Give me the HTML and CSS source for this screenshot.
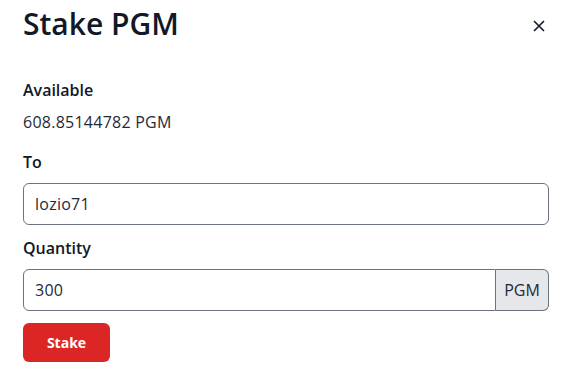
FILE: index.html
```html
<!DOCTYPE html>
<html lang="en">
<head>
<meta charset="utf-8">
<title>Stake PGM</title>
<link rel="stylesheet" href="styles.css">
</head>
<body>
<div class="modal">
  <div class="modal-header">
    <h3 class="modal-title">Stake PGM</h3>
    <button class="close" type="button" aria-label="Close">
      <svg width="12" height="12" viewBox="0 0 12 12"><path d="M1 1 L11 11 M11 1 L1 11" stroke="#111827" stroke-width="1.6" fill="none"/></svg>
    </button>
  </div>
  <div class="modal-body">
    <div class="label">Available</div>
    <div class="value">608.85144782 PGM</div>
    <label class="label label-to">To</label>
    <input class="input" type="text" value="lozio71">
    <label class="label label-qty">Quantity</label>
    <div class="input-group">
      <input class="input input-grouped" type="text" value="300">
      <span class="addon">PGM</span>
    </div>
    <button class="btn" type="button">Stake</button>
  </div>
</div>
</body>
</html>
```
FILE: styles.css
```css
html, body {
  margin: 0;
  padding: 0;
  background: #ffffff;
}
body {
  font-family: "Open Sans", "Liberation Sans", sans-serif;
  color: #1f2937;
  font-size: 16px;
  line-height: 24px;
}
.modal {
  padding: 6px 23px 0 23px;
}
.modal-header {
  display: flex;
  align-items: flex-start;
  justify-content: space-between;
}
.modal-title {
  margin: 0;
  font-size: 30px;
  line-height: 36px;
  font-weight: 600;
  color: #111827;
}
.close {
  margin: 14px 3px 0 0;
  padding: 0;
  border: 0;
  background: transparent;
  width: 12px;
  height: 12px;
  display: flex;
}
.modal-body {
  display: flex;
  flex-direction: column;
  align-items: flex-start;
  margin-top: 36px;
}
.label {
  display: block;
  font-weight: 600;
  color: #111827;
}
.value {
  margin-top: 8px;
  color: #1f2937;
  letter-spacing: 0.25px;
}
.label-to {
  margin-top: 16px;
}
.label-qty {
  margin-top: 11px;
}
.input {
  box-sizing: border-box;
  width: 526px;
  height: 42px;
  margin-top: 9px;
  padding: 0 11px;
  border: 1px solid #6b7280;
  border-radius: 6px;
  font-family: inherit;
  font-size: 16px;
  letter-spacing: 0.25px;
  color: #1f2937;
  background: #fff;
  outline: none;
}
.input-group {
  display: flex;
  width: 526px;
  margin-top: 9px;
}
.input-grouped {
  margin-top: 0;
  flex: 1;
  width: auto;
  min-width: 0;
  border-top-right-radius: 0;
  border-bottom-right-radius: 0;
}
.addon {
  box-sizing: border-box;
  height: 42px;
  width: 53px;
  display: flex;
  align-items: center;
  justify-content: center;
  border: 1px solid #6b7280;
  border-left: 0;
  border-radius: 0 6px 6px 0;
  background: #e5e7eb;
  color: #1f2937;
}
.btn {
  margin-top: 12px;
  width: 87px;
  height: 39px;
  border: 0;
  border-radius: 6px;
  background: #dc2626;
  color: #ffffff;
  font-family: inherit;
  font-size: 14px;
  font-weight: 700;
  padding: 0;
}
```
